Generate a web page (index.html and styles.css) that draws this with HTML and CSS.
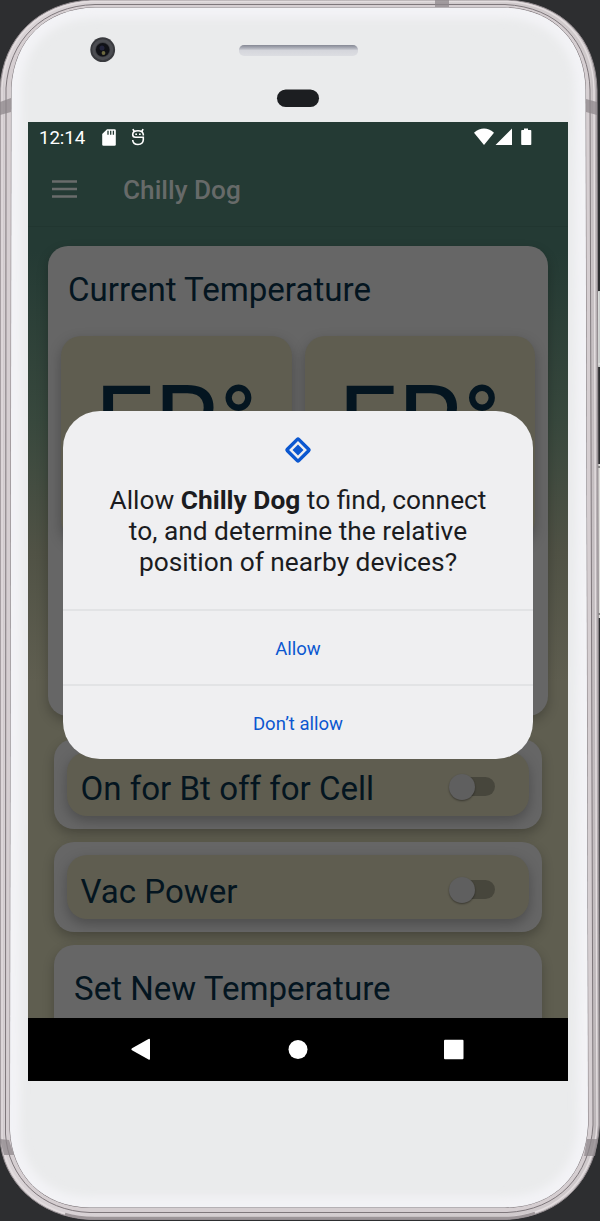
FILE: index.html
```html
<!DOCTYPE html>
<html lang="en">
<head>
<meta charset="utf-8">
<title>Chilly Dog</title>
<link rel="stylesheet" href="styles.css">
</head>
<body>
<div class="device">
  <svg class="frame" viewBox="0 0 600 1221" aria-hidden="true">
    <defs>
      <linearGradient id="edge" x1="0" y1="0" x2="1" y2="0">
        <stop offset="0" stop-color="#b9b2b5"/><stop offset=".008" stop-color="#d9d3d6"/>
        <stop offset=".985" stop-color="#cfc9cb"/><stop offset="1" stop-color="#aaa4a7"/>
      </linearGradient>
      <filter id="soft" x="-5%" y="-5%" width="110%" height="110%"><feGaussianBlur stdDeviation="4"/></filter>
      <clipPath id="faceClip"><path d="M95 7.500H505C555 9 585 43 585.500 90L588 1125C585 1175 555 1207 505 1207.500H90C42 1207 12 1175 10 1130L11.500 88C14 40 45 9 95 7.500Z"/></clipPath>
      <linearGradient id="slit" x1="0" y1="0" x2="0" y2="1">
        <stop offset="0" stop-color="#858894"/><stop offset=".3" stop-color="#b0b2bc"/><stop offset=".5" stop-color="#d5d6dc"/><stop offset="1" stop-color="#dddee2"/>
      </linearGradient>
    </defs>
    <rect x="594" y="291" width="9" height="76" rx="2" fill="#c9cccb"/>
    <path d="M598 292V366M598 364h2" stroke="#eeeeec" stroke-width="1"/>
    <rect x="594" y="464" width="9" height="154" rx="2" fill="#deddda"/>
    <path d="M596 467h4M596 614h4" stroke="#858583" stroke-width="2"/>
    <path d="M90 0H508C562 3 596 38 597 90L599.500 1125C596 1180 562 1216 507 1219.500H90C38 1217 2 1181 0 1138V88C3 38 38 3 90 0Z" fill="url(#edge)" stroke="#918a8e" stroke-width="1"/>
    <path d="M92 1.500H507C560 4 593 39 594 90L597 1125C594 1178 560 1214 507 1217.500H90C39 1215 4 1179 2 1136V88C5 39 39 4 92 1.500Z" fill="none" stroke="#e3dddf" stroke-width="1.500"/>
    <path d="M95 4.500H505C558 7 589 42 590 90L593 1125C590 1176 558 1210 507 1212.500H90C41 1211 8 1177 5.500 1134L6 88C9 41 42 6 95 4.500Z" fill="#d5ced1" stroke="#7e777b" stroke-width="1"/>
    <path d="M65 1214Q78 1218 95 1218H505Q520 1218 535 1213" fill="none" stroke="#9c9598" stroke-width="2.500"/>
    <path d="M0 102L11 98V112L0 115ZM586 99L597 102V115L586 112ZM435 0h14v7h-14ZM0 1139l9 1 5 15H4ZM587 1139h11l-3 17h-11Z" fill="#8d878b" fill-opacity=".75"/>
    <path d="M95 7.500H505C555 9 585 43 585.500 90L588 1125C585 1175 555 1207 505 1207.500H90C42 1207 12 1175 10 1130L11.500 88C14 40 45 9 95 7.500Z" fill="#eaebec" stroke="#777074" stroke-width="1"/>
    <g clip-path="url(#faceClip)"><path d="M95 8H505C555 9 585 43 585.500 90L588 1125C585 1175 555 1207 505 1207H90C42 1207 12 1175 10 1130L11.500 88C14 40 45 9 95 8Z" fill="none" stroke="#f3f3f6" stroke-width="20" filter="url(#soft)"/></g>
    <circle cx="102.700" cy="49.700" r="12.400" fill="#393a3e"/>
    <circle cx="102.700" cy="49.700" r="9" fill="none" stroke="#4c4d52" stroke-width="3"/>
    <circle cx="102.700" cy="49.700" r="6.800" fill="#101116"/>
    <circle cx="102" cy="48" r="2.500" fill="#22233a"/>
    <circle cx="103.500" cy="53" r="1.900" fill="#6d6940"/>
    <rect x="239" y="45" width="119" height="11" rx="5" fill="url(#slit)"/>
    <rect x="277" y="89.500" width="42" height="17.500" rx="8.700" fill="#1c1e21"/>
  </svg>

  <div class="screen">
    <div class="app">
      <header class="status">
        <span class="clock">12:14</span>
        <svg class="sd" width="14" height="17" viewBox="0 0 14 17"><path d="M5 .3H12.500Q13.800 .3 13.800 1.600V15.500Q13.800 16.800 12.500 16.800H1.500Q.2 16.800 .2 15.500V5Z" fill="#fff"/><path d="M6 1.800v4M8.700 1.800v4M11.400 1.800v4" stroke="#243a34" stroke-width="1.300"/></svg>
        <svg class="debug" width="14" height="18" viewBox="0 0 14 18" fill="none" stroke="#fff" stroke-width="1.600"><path d="M3 3.600L2 1M11 3.600L12 1M12.300 7.500V6.300Q11.800 2.700 7 2.700Q1.700 2.700 1.700 6.500Q1.700 9.300 4.500 9.300H12.300V11.800Q12 16.500 7 16.500Q2 16.500 1.700 12"/><path d="M4.300 6.300h1.700M8 6.300h1.700"/></svg>
        <svg class="signals" width="58" height="18" viewBox="0 0 58 18" fill="#fff"><path d="M0 4.800Q10-3.600 20 4.800L10 17ZM38 .5V17H21.500ZM50 .5h4v1.500h2.500q.8 0 .8.800V16.200q0 .8-.8.800H48q-.8 0-.8-.8V2.800q0-.8.800-.8h2Z"/></svg>
      </header>
      <div class="appbar">
        <svg width="25" height="18" viewBox="0 0 25 18"><path d="M0 1.500h25M0 9h25M0 16.500h25" stroke="#696c6b" stroke-width="2.500"/></svg>
        <h1 class="title">Chilly Dog</h1>
      </div>
      <main class="content">
        <section class="card temps">
          <h2 class="heading">Current Temperature</h2>
          <div class="gauges">
            <div class="tile gauge">ER°</div>
            <div class="tile gauge">ER°</div>
          </div>
        </section>
        <section class="card option"><div class="tile row"><span>On for Bt off for Cell</span><span class="switch"><i class="thumb"></i></span></div></section>
        <section class="card option"><div class="tile row"><span>Vac Power</span><span class="switch"><i class="thumb"></i></span></div></section>
        <section class="card setter"><h2 class="heading">Set New Temperature</h2></section>
      </main>
      <div class="dialog" role="dialog">
        <div class="message">
          <svg width="28" height="28" viewBox="-14 -14 28 28"><rect x="-8" y="-8" width="16" height="16" rx="1" transform="rotate(45)" fill="none" stroke="#0b57d0" stroke-width="3.400"/><rect x="-3.900" y="-3.900" width="7.800" height="7.800" transform="rotate(45)" fill="#0b57d0"/></svg>
          <p class="question">Allow <b>Chilly Dog</b> to find, connect<br>to, and determine the relative<br>position of nearby devices?</p>
        </div>
        <button class="action">Allow</button>
        <button class="action">Don’t allow</button>
      </div>
    </div>
    <nav class="navbar">
      <svg width="540" height="63" viewBox="0 0 540 63" fill="#fff"><path d="M104 30.300L120.500 20.900Q122 20.200 122 21.700V40.800Q122 42.300 120.500 41.500L104 32.200Q102.500 31.300 104 30.300Z"/><circle cx="270" cy="31.500" r="9.500"/><rect x="416" y="21.700" width="19.500" height="19.500" rx="1"/></svg>
    </nav>
  </div>
</div>
</body>
</html>
```

FILE: styles.css
```css
* { box-sizing: border-box; }
body { margin: 0; background: #2d2e30; font-family: Roboto, "Liberation Sans", sans-serif; }
h1, h2, p { margin: 0; font-weight: 400; }
.device { position: relative; width: 600px; height: 1221px; padding: 122px 32px 0 28px; overflow: hidden; }
.frame { position: absolute; inset: 0; width: 600px; height: 1221px; }
.screen { position: relative; width: 540px; height: 959px; display: flex; flex-direction: column; overflow: hidden; background: #000; }
.app { position: relative; height: 896px; overflow: hidden; display: flex; flex-direction: column; background: linear-gradient(#243a34 0, #243a34 130px, #38483d 300px, #505245 430px, #5f5e50 560px); }
.status { height: 30px; display: flex; align-items: center; padding: 0 36px 0 11px; color: #fff; }
.clock { font-size: 18.7px; letter-spacing: -.1px; width: 63px; line-height: 30px; padding-top: 2px; }
.debug { margin-left: 15px; }
.signals { margin-left: auto; }
.appbar { height: 75px; flex: none; display: flex; align-items: center; padding-left: 24px; gap: 46px; background: #243a34; border-bottom: 1px solid #213630; }
.title { font-size: 26.2px; font-weight: 500; color: #676a69; line-height: 30px; padding-top: 2px; }
.content { display: flex; flex-direction: column; gap: 13px; padding-top: 19px; color: #041520; }
.card { background: #666; border-radius: 20px; margin: 0 26px; flex: none; box-shadow: 0 5px 12px rgba(0, 0, 0, .24); }
.tile { background: #5f5d50; border-radius: 20px; box-shadow: 0 5px 13px rgba(0, 0, 0, .26); }
.heading { font-size: 33.1px; line-height: 40px; }
.temps { height: 470px; margin: 0 20px 10px; padding: 24px 13px 0; }
.temps .heading { padding-left: 7px; }
.gauges { display: flex; gap: 13px; padding-top: 26px; }
.gauge { flex: 1; height: 204px; font-size: 105px; line-height: 123px; padding-top: 28px; text-align: center; }
.option { height: 90px; padding: 13px; }
.row { height: 64px; display: flex; align-items: center; justify-content: space-between; padding: 0 34.5px 0 13.5px; font-size: 33.1px; }
.row > span:first-child { padding-top: 8px; }
.switch { width: 46px; height: 19px; border-radius: 10px; background: linear-gradient(90deg, transparent 12px, #47463c 12px); display: flex; align-items: center; padding-top: 1px; margin-top: 4px; }
.thumb { flex: none; width: 26px; height: 26px; border-radius: 50%; background: #5f5f5f; box-shadow: 0 1px 2px rgba(0, 0, 0, .4); }
.setter { height: 180px; padding: 24px 20px; }
.dialog { position: absolute; left: 35px; top: 288.5px; width: 470px; height: 348.5px; border-radius: 37px; overflow: hidden; background: #efeff1; display: flex; flex-direction: column; }
.message { height: 198.500px; display: flex; flex-direction: column; align-items: center; padding-top: 25.500px; }
.question { margin-top: 20.500px; font-size: 26.3px; line-height: 31px; text-align: center; color: #1b1c1f; }
.question b { font-weight: 700; }
.action { height: 75px; border: 0; border-top: 2px solid #e2e3e5; background: none; color: #0b57d0; font: 400 18.500px/22px Roboto, sans-serif; padding: 2px 0 0; }
.navbar { height: 63px; }
```
